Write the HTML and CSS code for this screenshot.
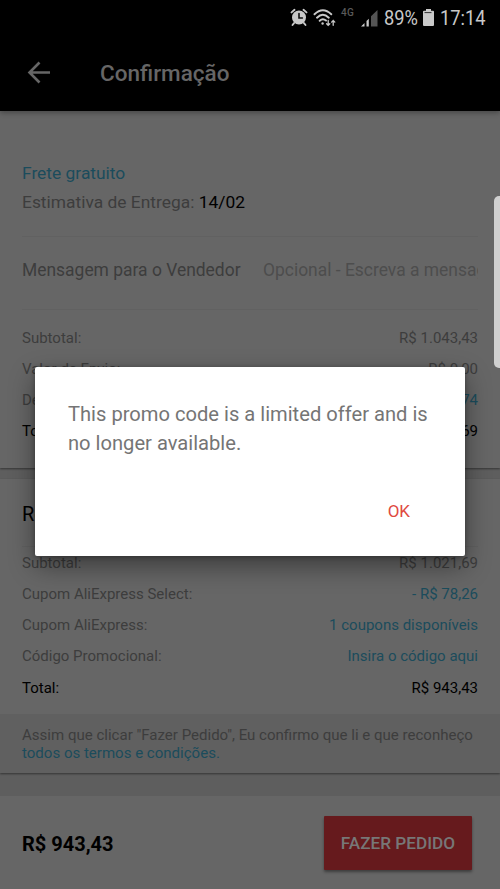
FILE: index.html
```html
<!DOCTYPE html>
<html lang="pt-BR">
<head>
<meta charset="utf-8">
<title>Confirmação</title>
<link rel="stylesheet" href="styles.css">
</head>
<body>
<div class="screen">
  <div class="statusbar">
    <svg class="alarm" width="18" height="19" viewBox="0 0 18 19">
      <g fill="none" stroke="#c9c9c9" stroke-linecap="round">
        <circle cx="9" cy="9.500" r="7" fill="#c9c9c9" stroke="none"/>
        <path d="M1.500 4.400 4.500 1.800M16.500 4.400 13.500 1.800M4 15.200 2.500 17M14 15.200l1.500 1.800" stroke-width="1.900"/>
        <path d="M9 5.600V10h3.400" stroke="#111" stroke-width="1.600"/>
      </g>
    </svg>
    <svg class="wifi" width="23" height="19" viewBox="0 0 23 19">
      <g fill="none" stroke="#c9c9c9" stroke-linecap="round">
        <path d="M1.500 6.300Q9.800 -1.800 18.300 6.300M4 9.700Q9.800 4 15.800 9.700M6.700 12.800Q9.800 10 13 12.600" stroke-width="1.900"/>
        <circle cx="9.600" cy="15.500" r="1.200" fill="#c9c9c9" stroke="none"/>
        <path d="M15.200 12.500v4.800M13.600 15.700l1.600 1.700 1.600-1.700M20.200 17.300v-4.800M18.600 14.100l1.600-1.700 1.600 1.700" stroke-width="1.300"/>
      </g>
    </svg>
    <span class="network">4G</span>
    <svg class="signal" width="17" height="17" viewBox="0 0 17 17">
      <path d="M16.500 0V16.500H10V6.300Z" fill="#555"/>
      <path d="M0 16.500 3.500 13v3.500ZM5.500 16.500v-5.500L7.800 8.700v7.800Z" fill="#c9c9c9"/>
    </svg>
    <span class="percent"><span class="narrow">89%</span></span>
    <svg class="battery" width="11" height="17" viewBox="0 0 11 17"><path d="M3 0h5v1.800H10q1 0 1 1V16q0 1-1 1H1q-1 0-1-1V2.800q0-1 1-1h2Z" fill="#c9c9c9"/><path d="M1.500 3.600h7" stroke="#333" stroke-width="1"/></svg>
    <span class="clock"><span class="narrow">17:14</span></span>
  </div>
  <header class="appbar">
    <svg class="back" width="24" height="24" viewBox="0 0 24 24"><path d="M12.500 1.500 2.500 11.500l10 10M2.500 11.500h20.500" fill="none" stroke="#666" stroke-width="2.600"/></svg>
    <h1>Confirmação</h1>
  </header>
  <main>
    <section class="card seller">
      <div class="shipping">
        <div class="link">Frete gratuito</div>
        <div class="muted">Estimativa de Entrega: <span class="dark">14/02</span></div>
      </div>
      <div class="message">
        <span class="label">Mensagem para o Vendedor</span>
        <span class="placeholder">Opcional - Escreva a mensagem</span>
      </div>
      <div class="rows">
        <div class="row"><span>Subtotal:</span><span>R$ 1.043,43</span></div>
        <div class="row"><span>Valor de Envio:</span><span>R$ 0,00</span></div>
        <div class="row"><span>Desconto:</span><span class="link">- R$ 21,74</span></div>
        <div class="row dark"><span>Total:</span><span>R$ 1.021,69</span></div>
      </div>
    </section>
    <section class="card summary">
      <h2>Resumo do pedido</h2>
      <div class="rows">
        <div class="row"><span>Subtotal:</span><span>R$ 1.021,69</span></div>
        <div class="row"><span>Cupom AliExpress Select:</span><span class="link">- R$ 78,26</span></div>
        <div class="row"><span>Cupom AliExpress:</span><span class="link">1 coupons disponíveis</span></div>
        <div class="row"><span>Código Promocional:</span><span class="link">Insira o código aqui</span></div>
        <div class="row dark"><span>Total:</span><span>R$ 943,43</span></div>
      </div>
      <p class="terms">Assim que clicar "Fazer Pedido", Eu confirmo que li e que reconheço<br><span class="link">todos os termos e condições.</span></p>
    </section>
  </main>
  <footer class="checkout">
    <strong>R$ 943,43</strong>
    <button>FAZER PEDIDO</button>
  </footer>
  <div class="edge-handle"></div>
  <div class="dialog" role="dialog">
    <p>This promo code is a limited offer and is no longer available.</p>
    <div class="actions"><span>OK</span></div>
  </div>
</div>
</body>
</html>
```
FILE: styles.css
```css
* { box-sizing: border-box; }
body { margin: 0; font-family: Roboto, sans-serif; background: #666; }
h1, h2, p { margin: 0; }
.screen {
  position: relative;
  width: 500px;
  height: 889px;
  overflow: hidden;
  display: flex;
  flex-direction: column;
  background: #5e5e5e;
  color: #3d3d3d;
}
.statusbar {
  height: 36px;
  flex: none;
  background: #000;
  color: #c9c9c9;
  display: flex;
  align-items: center;
  padding-left: 290px;
}
.statusbar > * { flex: none; }
.alarm, .wifi, .battery { margin-top: -2px; }
.wifi { margin-left: 5px; }
.network { width: 20px; margin: -10px 0 0 5px; font-size: 10px; font-weight: 500; line-height: 10px; letter-spacing: .3px; color: #5a5a5a; }
.percent, .clock { font-size: 21px; line-height: 36px; white-space: nowrap; }
.percent { width: 34px; margin-left: 6px; }
.clock { width: 48px; margin-left: 6px; }
.narrow { display: inline-block; transform: scaleX(.87); transform-origin: left; }
.battery { margin-left: 5px; }
.appbar {
  height: 75px;
  flex: none;
  background: #000;
  display: flex;
  align-items: center;
  padding: 0 0 2px 27px;
  box-shadow: 0 2px 5px rgba(0, 0, 0, .3);
  position: relative;
}
.appbar h1 { margin-left: 49px; font-size: 22.500px; font-weight: 500; color: #666; line-height: 30px; }
.card { background: #666; box-shadow: 0 1px 2px rgba(0, 0, 0, .45); }
.seller { height: 357px; padding: 48px 22px 0; margin-bottom: 11px; }
.shipping { height: 78px; border-bottom: 1px solid #616161; font-size: 17.400px; line-height: 28.500px; }
.link { color: #1b4c5c; }
.dark { color: #000; }
.message {
  height: 73px;
  display: flex;
  align-items: center;
  padding-bottom: 7px;
  border-bottom: 1px solid #616161;
  font-size: 17.450px;
  white-space: nowrap;
}
.message .label { width: 241px; flex: none; }
.message .placeholder { color: #4d4d4d; overflow: hidden; }
.rows { font-size: 15px; }
.seller .rows { padding-top: 12px; }
.row { height: 31.250px; display: flex; align-items: center; justify-content: space-between; }
.summary { height: 294px; }
.summary h2 {
  margin: 0 22px;
  height: 68px;
  font-size: 20px;
  line-height: 70px;
  font-weight: 400;
  color: #000;
  border-bottom: 1px solid #616161;
}
.summary .rows { padding: 0 22px; height: 167px; }
.terms { height: 59px; background: #606060; padding: 13px 22px 0; font-size: 15.040px; line-height: 17.500px; white-space: nowrap; }
.checkout {
  margin-top: auto;
  height: 93px;
  flex: none;
  background: #666;
  padding: 0 28px 0 22px;
  display: flex;
  align-items: center;
  justify-content: space-between;
}
.checkout strong { font-size: 20px; font-weight: 700; color: #000; padding-top: 2px; }
.checkout button {
  width: 148px;
  height: 54px;
  padding: 0;
  border: 0;
  border-radius: 1px;
  background: #661a1d;
  color: #777;
  font: 500 17.200px Roboto, sans-serif;
  box-shadow: 0 2px 3px rgba(0, 0, 0, .4);
}
.edge-handle {
  position: absolute;
  left: 494px;
  top: 196px;
  width: 10px;
  height: 172px;
  border-radius: 6px;
  background: #d0d0d0;
}
.dialog {
  position: absolute;
  left: 35px;
  top: 367px;
  width: 430px;
  height: 189px;
  padding: 33px 30px 0 33px;
  border-radius: 2px;
  background: #fff;
  color: #757575;
  box-shadow: 0 10px 26px rgba(0, 0, 0, .42), 0 1px 5px rgba(0, 0, 0, .3);
}
.dialog p { font-size: 20.150px; line-height: 29px; }
.actions { display: flex; justify-content: flex-end; padding: 42px 25px 0 0; font-size: 17px; line-height: 22px; color: #e04a3f; }
```
